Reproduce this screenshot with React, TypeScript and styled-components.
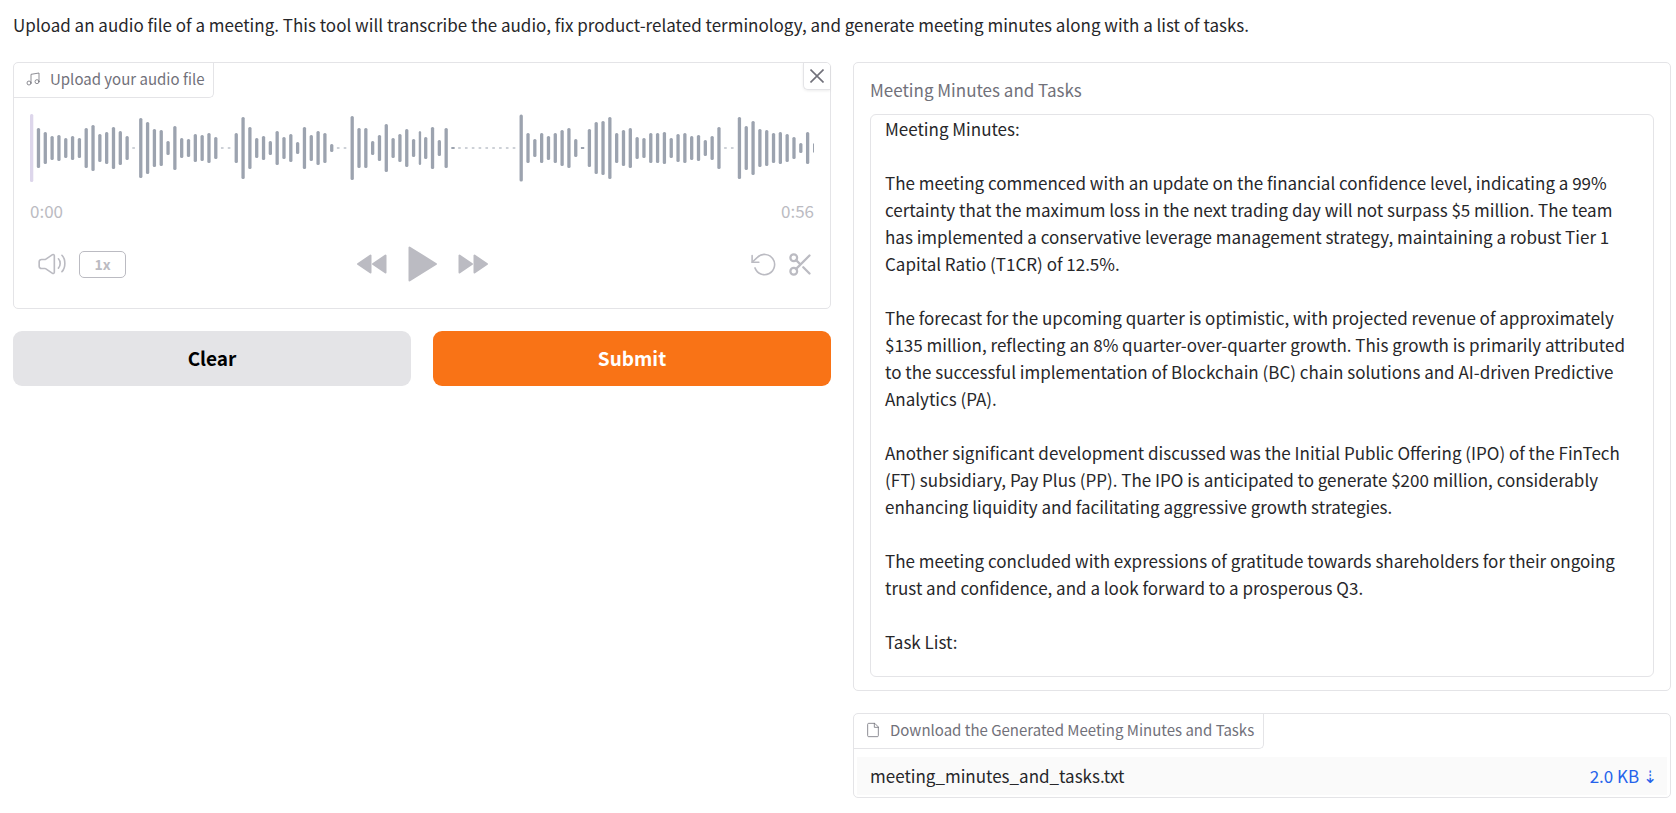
import React from "react";
import styled, { createGlobalStyle } from "styled-components";

const GlobalStyle = createGlobalStyle`
  *, *::before, *::after { box-sizing: border-box; }
  body {
    margin: 0;
    background: #ffffff;
    color: #27272a;
    font-family: "Noto Sans CJK SC", "Noto Sans", sans-serif;
    font-size: 17px;
    line-height: 27px;
  }
  button, textarea { font: inherit; }
`;

const Page = styled.main`
  display: flex;
  flex-direction: column;
  gap: 24px;
  padding: 11px 5px 16px 13px;
`;

const Intro = styled.p`
  margin: 0;
`;

const Columns = styled.div`
  display: flex;
  align-items: flex-start;
  gap: 22px;
`;

const Column = styled.section`
  display: flex;
  flex: 1 1 0;
  flex-direction: column;
  gap: 22px;
  min-width: 0;
`;

const Block = styled.div`
  position: relative;
  border: 1px solid #e4e4e7;
  border-radius: 5px;
  background: #ffffff;
`;

const BlockTag = styled.div`
  display: inline-flex;
  align-items: center;
  gap: 9px;
  height: 35px;
  padding: 0 9px 2px 11px;
  border: solid #e4e4e7;
  border-width: 0 1px 1px 0;
  border-radius: 0 0 5px 0;
  color: #71717a;
  font-size: 15px;
  line-height: 20px;
  vertical-align: top;
`;

const CloseButton = styled.button`
  position: absolute;
  top: 0;
  right: 0;
  display: flex;
  align-items: center;
  justify-content: center;
  width: 27px;
  height: 27px;
  padding: 0;
  border: solid #e4e4e7;
  border-width: 0 0 1px 1px;
  border-radius: 0 4px 0 5px;
  background: #ffffff;
  box-shadow: 0 1px 3px rgba(0, 0, 0, 0.08);
  color: #71717a;
  cursor: pointer;
`;

const Player = styled.div`
  display: flex;
  flex-direction: column;
  padding: 16px 16px 23px;
  color: #bbbbc2;
`;

const Wave = styled.svg`
  display: block;
  width: 100%;
  height: 68px;
`;

const Times = styled.div`
  display: flex;
  justify-content: space-between;
  margin-top: 15px;
`;

const Controls = styled.div`
  display: grid;
  grid-template-columns: 1fr auto 1fr;
  align-items: center;
  height: 40px;
  margin-top: 21px;
  padding-bottom: 2px;
`;

const ControlGroup = styled.div<{ $gap: number; $align?: string }>`
  display: flex;
  align-items: center;
  justify-content: ${(p) => p.$align ?? "flex-start"};
  gap: ${(p) => p.$gap}px;
  padding: 0 0 0 8px;

  &:last-child { padding: 0; }
  &:nth-child(2) { padding: 0; }
`;

const IconButton = styled.button`
  display: flex;
  padding: 0;
  border: 0;
  background: none;
  color: inherit;
  cursor: pointer;
`;

const SpeedButton = styled.button`
  width: 47px;
  height: 27px;
  padding: 0;
  border: 1px solid #bbbbc2;
  border-radius: 5px;
  background: none;
  color: inherit;
  font-size: 14px;
  font-weight: 700;
  line-height: 25px;
  cursor: pointer;
`;

const Actions = styled.div`
  display: flex;
  gap: 22px;
`;

const ActionButton = styled.button<{ $primary?: boolean }>`
  flex: 1 1 0;
  height: 55px;
  padding: 0 0 2px;
  border: 0;
  border-radius: 9px;
  background: ${(p) => (p.$primary ? "#f97316" : "#e4e4e7")};
  color: ${(p) => (p.$primary ? "#ffffff" : "#000000")};
  font-size: 19px;
  font-weight: 600;
  cursor: pointer;
`;

const OutputBlock = styled(Block)`
  display: flex;
  flex-direction: column;
  padding: 13px 16px 13px;
`;

const OutputLabel = styled.label`
  margin-bottom: 11px;
  color: #71717a;
`;

const OutputText = styled.textarea`
  display: block;
  width: 100%;
  height: 563px;
  padding: 0 14px;
  border: 1px solid #e4e4e7;
  border-radius: 6px;
  outline: none;
  background: #ffffff;
  color: #27272a;
  overflow: hidden;
  resize: none;
`;

const FileTable = styled.table`
  width: calc(100% - 6px);
  margin: 8px 3px 2px;
  border-collapse: collapse;
  background: #fafafa;

  td { height: 38px; padding: 0 13px 2px; }
  td:last-child { padding-right: 10px; text-align: right; }
`;

const DownloadLink = styled.a`
  color: #2563eb;
  text-decoration: none;
`;

const BAR_HEIGHTS = [
  68, 40, 32, 24, 26, 20, 24, 20, 40, 46, 28, 32, 42, 34, 24, 1, 60, 52, 38, 36, 14, 44, 20, 18, 28,
  26, 30, 22, 1, 1, 30, 62, 42, 20, 24, 14, 34, 22, 28, 12, 42, 26, 34, 30, 8, 1, 1, 64, 40, 40, 14,
  26, 48, 20, 28, 38, 18, 34, 22, 42, 16, 40, 2, 1, 1, 1, 1, 1, 1, 1, 1, 1, 67, 30, 18, 30, 24, 30,
  36, 40, 18, 2, 38, 52, 54, 62, 30, 36, 40, 22, 20, 30, 30, 32, 20, 28, 30, 24, 26, 16, 24, 42, 1,
  1, 62, 44, 54, 38, 36, 30, 32, 28, 22, 10, 32,
];
const BAR_PITCH = 6.82;
const SECOND_TILE = 58;

function Waveform() {
  return (
    <Wave viewBox="0 0 784 68" preserveAspectRatio="none" role="img" aria-label="Audio waveform">
      {BAR_HEIGHTS.map((h, i) => (
        <rect
          key={i}
          x={i * BAR_PITCH - (i >= SECOND_TILE ? 1.5 : 0)}
          y={34 - h / 2}
          width={i === SECOND_TILE - 1 ? 2.4 : h === 1 ? 2.6 : 3.3}
          height={h}
          rx={h > 2 ? 1.5 : 0}
          fill={i === 0 ? "#ddd6eb" : "#9ca3af"}
        />
      ))}
      <rect x={783} y={29.5} width={1} height={9} fill="#9ca3af" />
    </Wave>
  );
}

type LineIconProps = { size: number; stroke?: number; children: React.ReactNode };

function LineIcon({ size, stroke = 1.5, children }: LineIconProps) {
  return (
    <svg
      width={size}
      height={size}
      viewBox="0 0 24 24"
      fill="none"
      stroke="currentColor"
      strokeWidth={stroke}
      strokeLinecap="round"
      strokeLinejoin="round"
      aria-hidden="true"
    >
      {children}
    </svg>
  );
}

function SkipIcon({ forward }: { forward?: boolean }) {
  const shapes = forward
    ? ["M1.5 1.5V18.5L14 10Z", "M16.5 1.5V18.5L29 10Z"]
    : ["M13.5 1.5V18.5L1 10Z", "M28.5 1.5V18.5L16 10Z"];
  return (
    <svg width="30" height="20" viewBox="0 0 30 20" fill="currentColor" stroke="currentColor" strokeWidth="2" strokeLinejoin="round" aria-hidden="true">
      {shapes.map((d) => (
        <path key={d} d={d} />
      ))}
    </svg>
  );
}

const MINUTES = `Meeting Minutes:

The meeting commenced with an update on the financial confidence level, indicating a 99% certainty that the maximum loss in the next trading day will not surpass $5 million. The team has implemented a conservative leverage management strategy, maintaining a robust Tier 1 Capital Ratio (T1CR) of 12.5%.

The forecast for the upcoming quarter is optimistic, with projected revenue of approximately $135 million, reflecting an 8% quarter-over-quarter growth. This growth is primarily attributed to the successful implementation of Blockchain (BC) chain solutions and AI-driven Predictive Analytics (PA).

Another significant development discussed was the Initial Public Offering (IPO) of the FinTech (FT) subsidiary, Pay Plus (PP). The IPO is anticipated to generate $200 million, considerably enhancing liquidity and facilitating aggressive growth strategies.

The meeting concluded with expressions of gratitude towards shareholders for their ongoing trust and confidence, and a look forward to a prosperous Q3.

Task List:`;

export default function App() {
  return (
    <>
      <GlobalStyle />
      <Page>
        <Intro>
          Upload an audio file of a meeting. This tool will transcribe the audio, fix product-related
          terminology, and generate meeting minutes along with a list of tasks.
        </Intro>
        <Columns>
          <Column>
            <Block>
              <BlockTag>
                <LineIcon size={16} stroke={1.2}>
                  <path d="M9 18V5l12-2v13" />
                  <circle cx="6" cy="18" r="3" />
                  <circle cx="18" cy="16" r="3" />
                </LineIcon>
                Upload your audio file
              </BlockTag>
              <CloseButton type="button" aria-label="Remove audio">
                <svg width="14" height="14" viewBox="0 0 14 14" stroke="currentColor" strokeWidth="1.6" aria-hidden="true">
                  <path d="M0.5 0.5L13.5 13.5M13.5 0.5L0.5 13.5" />
                </svg>
              </CloseButton>
              <Player>
                <Waveform />
                <Times>
                  <time>0:00</time>
                  <time>0:56</time>
                </Times>
                <Controls>
                  <ControlGroup $gap={13}>
                    <IconButton type="button" aria-label="Adjust volume">
                      <LineIcon size={28} stroke={1.4}>
                        <path d="M1 13.857V10.143a2 2 0 0 1 2-2h2.9a1 1 0 0 0 .55-.165l6-3.956A1 1 0 0 1 14 4.857v14.286a1 1 0 0 1-1.55.835l-6-3.956a1 1 0 0 0-.55-.165H3a2 2 0 0 1-2-2Z" />
                        <path d="M17.5 7.5S19 9 19 11.5s-1.5 4-1.5 4" />
                        <path d="M20.5 4.5S23 7 23 11.5s-2.5 7-2.5 7" />
                      </LineIcon>
                    </IconButton>
                    <SpeedButton type="button">1x</SpeedButton>
                  </ControlGroup>
                  <ControlGroup $gap={21}>
                    <IconButton type="button" aria-label="Skip backwards">
                      <SkipIcon />
                    </IconButton>
                    <IconButton type="button" aria-label="Play">
                      <svg width="29" height="36" viewBox="0 0 29 36" fill="currentColor" stroke="currentColor" strokeWidth="2" strokeLinejoin="round" aria-hidden="true">
                        <path d="M1.5 1.5V34.5L28 18Z" />
                      </svg>
                    </IconButton>
                    <IconButton type="button" aria-label="Skip forward">
                      <SkipIcon forward />
                    </IconButton>
                  </ControlGroup>
                  <ControlGroup $gap={9} $align="flex-end">
                    <IconButton type="button" aria-label="Reset audio">
                      <LineIcon size={27} stroke={1.4}>
                        <path d="M1 4v6h6" />
                        <path d="M3.51 15a9 9 0 1 0 2.13-9.36L1 10" />
                      </LineIcon>
                    </IconButton>
                    <IconButton type="button" aria-label="Trim audio">
                      <LineIcon size={27} stroke={2}>
                        <circle cx="6" cy="6" r="3" />
                        <circle cx="6" cy="18" r="3" />
                        <path d="M20 4L8.12 15.88M14.47 14.48L20 20M8.12 8.12L12 12" />
                      </LineIcon>
                    </IconButton>
                  </ControlGroup>
                </Controls>
              </Player>
            </Block>
            <Actions>
              <ActionButton type="button">Clear</ActionButton>
              <ActionButton type="button" $primary>
                Submit
              </ActionButton>
            </Actions>
          </Column>
          <Column>
            <OutputBlock>
              <OutputLabel htmlFor="minutes">Meeting Minutes and Tasks</OutputLabel>
              <OutputText id="minutes" readOnly value={MINUTES} />
            </OutputBlock>
            <Block>
              <BlockTag>
                <LineIcon size={16} stroke={1.2}>
                  <path d="M14 2H5.5a1.5 1.5 0 0 0-1.5 1.5v17a1.5 1.5 0 0 0 1.5 1.5h13a1.5 1.5 0 0 0 1.5-1.5V8Z" />
                  <path d="M14 2v6h6" />
                </LineIcon>
                Download the Generated Meeting Minutes and Tasks
              </BlockTag>
              <FileTable>
                <tbody>
                  <tr>
                    <td>meeting_minutes_and_tasks.txt</td>
                    <td>
                      <DownloadLink href="#meeting_minutes_and_tasks.txt">2.0 KB ⇣</DownloadLink>
                    </td>
                  </tr>
                </tbody>
              </FileTable>
            </Block>
          </Column>
        </Columns>
      </Page>
    </>
  );
}
